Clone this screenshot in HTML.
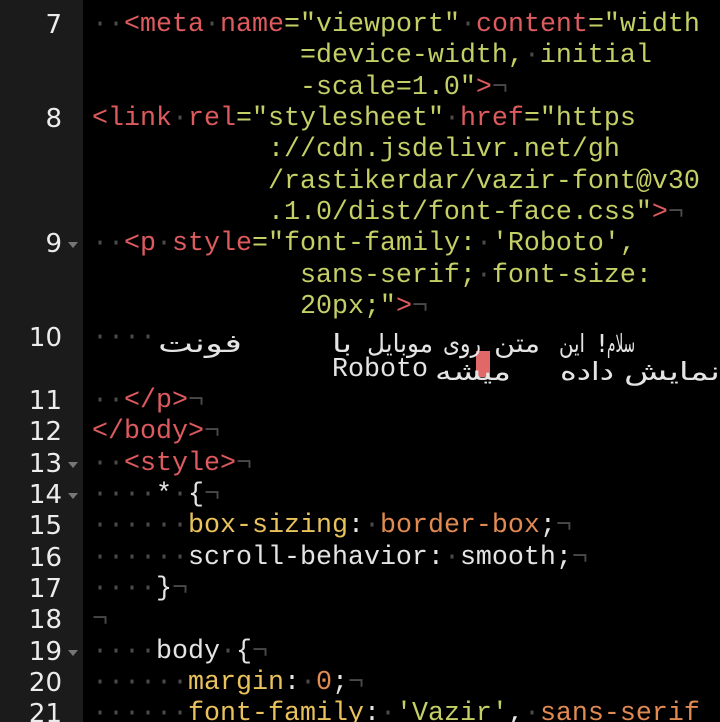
<!DOCTYPE html>
<html><head><meta charset="utf-8"><style>
html,body{margin:0;padding:0;background:#000;width:720px;height:722px;overflow:hidden;position:relative}
#g{position:absolute;left:0;top:0;width:83px;height:722px;background:#1b1b1b}
#wrap{position:absolute;left:0;top:4px;width:720px;height:718px;overflow:hidden}
.r{position:absolute;left:92px;white-space:pre;font-family:"Liberation Mono","DejaVu Sans Mono",monospace;font-size:26.67px;line-height:31.33px;height:31.33px;color:#e4e4e4}
.n{position:absolute;width:62px;text-align:right;left:0;font-family:"DejaVu Sans","Liberation Sans",sans-serif;font-size:26px;line-height:31.33px;color:#ececec}
.f{position:absolute;left:68px;width:0;height:0;border-left:5px solid transparent;border-right:5px solid transparent;border-top:6px solid #777}
.t{color:#dd5a5e}.s{color:#c4cf66}.p{color:#e9c25c}.o{color:#e18a52}.d{color:#4a4a4a}
svg text{font-family:"DejaVu Sans","Noto Sans CJK SC",sans-serif;font-size:25px;fill:#e4e4e4}
</style></head><body>
<div id="g"></div>
<div id="wrap">
<div class="n" style="top:6px">7</div>
<div class="n" style="top:100px">8</div>
<div class="n" style="top:225px">9</div><div class="f" style="top:238px"></div>
<div class="n" style="top:319px">10</div>
<div class="n" style="top:382px">11</div>
<div class="n" style="top:413px">12</div>
<div class="n" style="top:445px">13</div><div class="f" style="top:458px"></div>
<div class="n" style="top:476px">14</div><div class="f" style="top:489px"></div>
<div class="n" style="top:507px">15</div>
<div class="n" style="top:539px">16</div>
<div class="n" style="top:570px">17</div>
<div class="n" style="top:601px">18</div>
<div class="n" style="top:633px">19</div><div class="f" style="top:646px"></div>
<div class="n" style="top:664px">20</div>
<div class="n" style="top:695px">21</div>

<div class="r" style="top:6px"><span class="d">··</span><span class="t">&lt;meta</span><span class="d">·</span><span class="t">name</span><span class="s">="viewport"</span><span class="d">·</span><span class="t">content</span><span class="s">="width</span></div>
<div class="r" style="top:37px">             <span class="s">=device-width,</span><span class="d">·</span><span class="s">initial</span></div>
<div class="r" style="top:69px">             <span class="s">-scale=1.0"</span><span class="t">&gt;</span><span class="d">¬</span></div>
<div class="r" style="top:100px"><span class="t">&lt;link</span><span class="d">·</span><span class="t">rel</span><span class="s">="stylesheet"</span><span class="d">·</span><span class="t">href</span><span class="s">="https</span></div>
<div class="r" style="top:131px">           <span class="s">://cdn.jsdelivr.net/gh</span></div>
<div class="r" style="top:163px">           <span class="s">/rastikerdar/vazir-font@v30</span></div>
<div class="r" style="top:194px">           <span class="s">.1.0/dist/font-face.css"</span><span class="t">&gt;</span><span class="d">¬</span></div>
<div class="r" style="top:225px"><span class="d">··</span><span class="t">&lt;p</span><span class="d">·</span><span class="t">style</span><span class="s">="font-family:</span><span class="d">·</span><span class="s">'Roboto',</span></div>
<div class="r" style="top:257px">             <span class="s">sans-serif;</span><span class="d">·</span><span class="s">font-size:</span></div>
<div class="r" style="top:288px">             <span class="s">20px;"</span><span class="t">&gt;</span><span class="d">¬</span></div>
<div class="r" style="top:319px"><span class="d">····</span></div>
<div class="r" style="top:351px;left:332px">Roboto</div>
<div style="position:absolute;left:476px;top:347px;width:14px;height:26px;background:#e06868"></div>
<svg width="720" height="722" style="position:absolute;left:0;top:0" xmlns="http://www.w3.org/2000/svg">
<g text-anchor="middle">
<text x="621" y="348" textLength="28" lengthAdjust="spacingAndGlyphs">سلام</text>
<text x="602" y="348">!</text>
<text x="572" y="348" textLength="26" lengthAdjust="spacingAndGlyphs">این</text>
<text x="517" y="348" textLength="46" lengthAdjust="spacingAndGlyphs">متن</text>
<text x="462" y="348" textLength="38" lengthAdjust="spacingAndGlyphs">روی</text>
<text x="400" y="348" textLength="66" lengthAdjust="spacingAndGlyphs">موبایل</text>
<text x="342" y="348" textLength="20" lengthAdjust="spacingAndGlyphs">با</text>
<text x="200" y="348" textLength="84" lengthAdjust="spacingAndGlyphs">فونت</text>
<text x="473" y="376" textLength="76" lengthAdjust="spacingAndGlyphs">میشه</text>
<text x="587" y="376" textLength="54" lengthAdjust="spacingAndGlyphs">داده</text>
<text x="672" y="376" textLength="96" lengthAdjust="spacingAndGlyphs">نمایش</text>
</g>
</svg>
<div class="r" style="top:382px"><span class="d">··</span><span class="t">&lt;/p&gt;</span><span class="d">¬</span></div>
<div class="r" style="top:413px"><span class="t">&lt;/body&gt;</span><span class="d">¬</span></div>
<div class="r" style="top:445px"><span class="d">··</span><span class="t">&lt;style&gt;</span><span class="d">¬</span></div>
<div class="r" style="top:476px"><span class="d">····</span>*<span class="d">·</span>{<span class="d">¬</span></div>
<div class="r" style="top:507px"><span class="d">······</span><span class="p">box-sizing</span>:<span class="d">·</span><span class="o">border-box</span>;<span class="d">¬</span></div>
<div class="r" style="top:539px"><span class="d">······</span>scroll-behavior:<span class="d">·</span>smooth;<span class="d">¬</span></div>
<div class="r" style="top:570px"><span class="d">····</span>}<span class="d">¬</span></div>
<div class="r" style="top:601px"><span class="d">¬</span></div>
<div class="r" style="top:633px"><span class="d">····</span>body<span class="d">·</span>{<span class="d">¬</span></div>
<div class="r" style="top:664px"><span class="d">······</span><span class="p">margin</span>:<span class="d">·</span><span class="o">0</span>;<span class="d">¬</span></div>
<div class="r" style="top:695px"><span class="d">······</span><span class="p">font-family</span>:<span class="d">·</span><span class="s">'Vazir'</span>,<span class="d">·</span><span class="o">sans-serif</span></div>
</div>
</body></html>
